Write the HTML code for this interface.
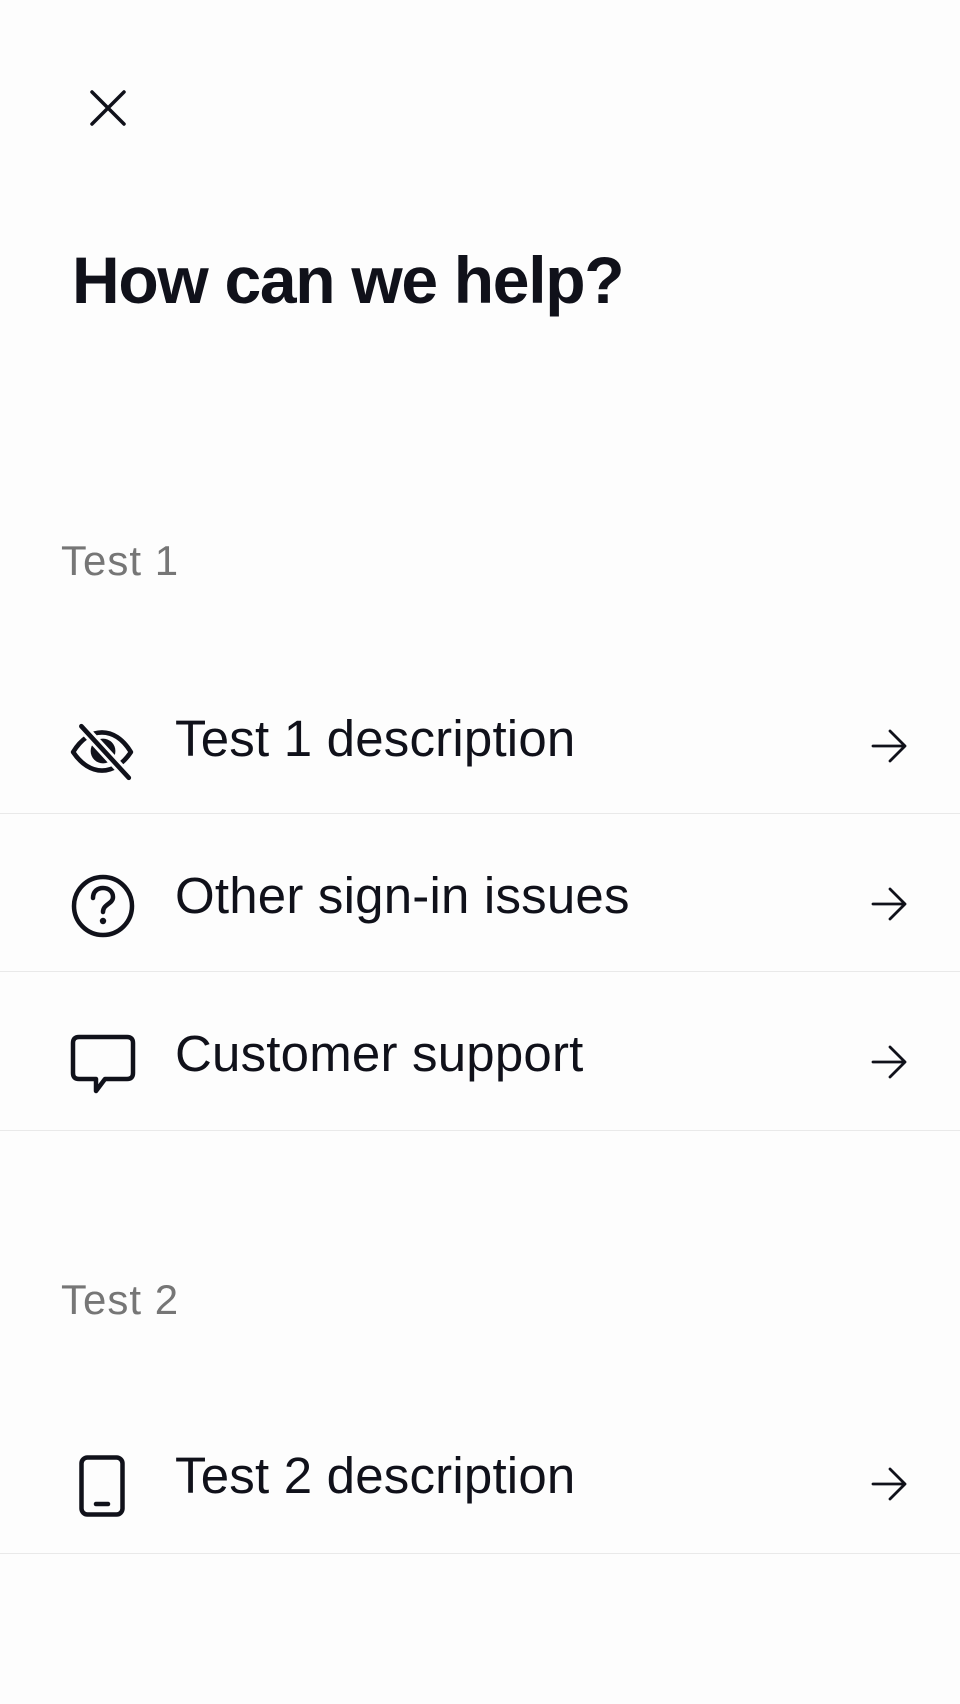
<!DOCTYPE html>
<html><head><meta charset="utf-8"><style>
html,body{margin:0;padding:0;}
body{width:960px;height:1704px;background:#fdfdfd;position:relative;overflow:hidden;font-family:"Liberation Sans",sans-serif;color:#10111a;}
.a{position:absolute;}
.t{position:absolute;font-size:51px;line-height:60px;white-space:nowrap;letter-spacing:0.2px;}
.l{position:absolute;font-size:42px;line-height:50px;color:#767676;left:61px;letter-spacing:1px;}
.d{position:absolute;left:0;width:960px;height:1px;background:#e9e9e9;}
svg{position:absolute;overflow:visible;}
</style></head><body>
<svg style="left:90px;top:90px" width="36" height="36" viewBox="0 0 36 36"><path d="M2 2L34 34M34 2L2 34" stroke="#10111a" stroke-width="3.5" stroke-linecap="round" fill="none"/></svg>
<div class="a" style="left:72px;top:240px;font-size:66px;font-weight:bold;line-height:80px;letter-spacing:-1.3px;">How can we help?</div>

<div class="l" style="top:536px">Test 1</div>

<svg style="left:69px;top:718px" width="66" height="66" viewBox="0 0 64 64"><path d="M4 33C12 20 22 14 32 14C42 14 52 20 60 33C52 45 42 51 32 51C22 51 12 45 4 33Z" fill="none" stroke="#10111a" stroke-width="4.5" stroke-linejoin="round"/><circle cx="33" cy="32" r="12" fill="#10111a"/><path d="M12 8L58 58" stroke="#fdfdfd" stroke-width="10"/><path d="M12 8L58 58" stroke="#10111a" stroke-width="4.5" stroke-linecap="round"/></svg>
<div class="t" style="left:175px;top:709px">Test 1 description</div>
<svg style="left:871px;top:729px" width="36" height="34" viewBox="0 0 36 34"><path d="M2 17H34M19 2L34 17L19 32" fill="none" stroke="#10111a" stroke-width="2.8" stroke-linecap="round" stroke-linejoin="round"/></svg>
<div class="d" style="top:813px"></div>

<svg style="left:71px;top:874px" width="64" height="64" viewBox="0 0 64 64"><circle cx="32" cy="32" r="29" fill="none" stroke="#10111a" stroke-width="4.5"/><path d="M22 24C22 17 27 14 32 14C38 14 42 18 42 23C42 30 32 30 32 38" fill="none" stroke="#10111a" stroke-width="4.5" stroke-linecap="round"/><circle cx="32" cy="47" r="3.2" fill="#10111a"/></svg>
<div class="t" style="left:175px;top:866px">Other sign-in issues</div>
<svg style="left:871px;top:887px" width="36" height="34" viewBox="0 0 36 34"><path d="M2 17H34M19 2L34 17L19 32" fill="none" stroke="#10111a" stroke-width="2.8" stroke-linecap="round" stroke-linejoin="round"/></svg>
<div class="d" style="top:971px"></div>

<svg style="left:71px;top:1035px" width="64" height="64" viewBox="0 0 64 64"><path d="M8 2H56Q62 2 62 8V38Q62 44 56 44H34L25 56V44H8Q2 44 2 38V8Q2 2 8 2Z" fill="none" stroke="#10111a" stroke-width="4.5" stroke-linejoin="round"/></svg>
<div class="t" style="left:175px;top:1024px">Customer support</div>
<svg style="left:871px;top:1045px" width="36" height="34" viewBox="0 0 36 34"><path d="M2 17H34M19 2L34 17L19 32" fill="none" stroke="#10111a" stroke-width="2.8" stroke-linecap="round" stroke-linejoin="round"/></svg>
<div class="d" style="top:1130px"></div>

<div class="l" style="top:1275px">Test 2</div>

<svg style="left:79px;top:1455px" width="46" height="62" viewBox="0 0 46 62"><rect x="2.5" y="2.5" width="41" height="57" rx="6" fill="none" stroke="#10111a" stroke-width="4.5"/><path d="M17 49H29" stroke="#10111a" stroke-width="4.5" stroke-linecap="round"/></svg>
<div class="t" style="left:175px;top:1446px">Test 2 description</div>
<svg style="left:871px;top:1467px" width="36" height="34" viewBox="0 0 36 34"><path d="M2 17H34M19 2L34 17L19 32" fill="none" stroke="#10111a" stroke-width="2.8" stroke-linecap="round" stroke-linejoin="round"/></svg>
<div class="d" style="top:1553px"></div>
</body></html>
